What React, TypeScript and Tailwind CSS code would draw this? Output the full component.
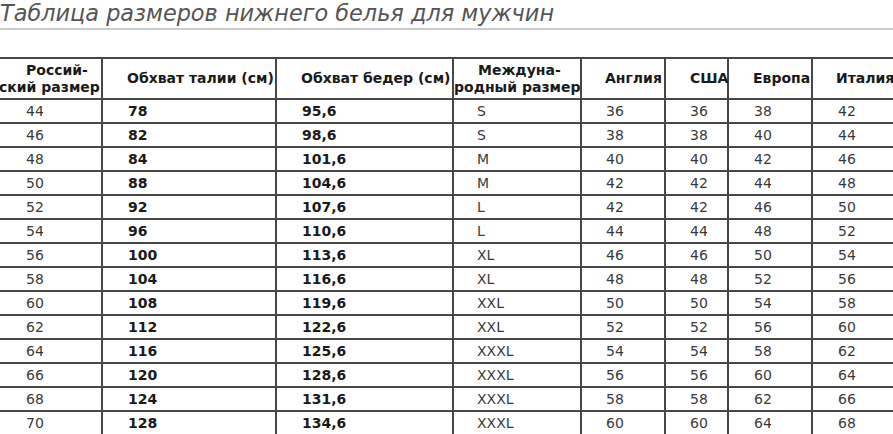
const rows: [string, string, string, string, string, string, string, string][] = [
  ['44', '78', '95,6', 'S', '36', '36', '38', '42'],
  ['46', '82', '98,6', 'S', '38', '38', '40', '44'],
  ['48', '84', '101,6', 'M', '40', '40', '42', '46'],
  ['50', '88', '104,6', 'M', '42', '42', '44', '48'],
  ['52', '92', '107,6', 'L', '42', '42', '46', '50'],
  ['54', '96', '110,6', 'L', '44', '44', '48', '52'],
  ['56', '100', '113,6', 'XL', '46', '46', '50', '54'],
  ['58', '104', '116,6', 'XL', '48', '48', '52', '56'],
  ['60', '108', '119,6', 'XXL', '50', '50', '54', '58'],
  ['62', '112', '122,6', 'XXL', '52', '52', '56', '60'],
  ['64', '116', '125,6', 'XXXL', '54', '54', '58', '62'],
  ['66', '120', '128,6', 'XXXL', '56', '56', '60', '64'],
  ['68', '124', '131,6', 'XXXL', '58', '58', '62', '66'],
  ['70', '128', '134,6', 'XXXL', '60', '60', '64', '68'],
];

const cell = 'border-2 border-[#474747] h-[24px] p-0 align-middle whitespace-nowrap';
const head = 'border-2 border-[#474747] p-0 align-middle whitespace-nowrap text-left font-bold text-[#1a1a1a]';

export default function App() {
  return (
    <div
      className="w-[893px] h-[434px] overflow-hidden bg-white"
      style={{ fontFamily: '"DejaVu Sans", Verdana, sans-serif' }}
    >
      <h1 className="text-[22.4px] leading-[27px] italic font-normal text-[#555555] whitespace-nowrap">
        Таблица размеров нижнего белья для мужчин
      </h1>
      <div className="mt-[1px] h-[2px] bg-[#cccccc]" />

      <table className="mt-[27px] ml-[-3px] table-fixed border-collapse w-[902px] text-[14px] leading-[17px]">
        <colgroup>
          <col className="w-[104px]" />
          <col className="w-[174px]" />
          <col className="w-[177px]" />
          <col className="w-[128px]" />
          <col className="w-[84px]" />
          <col className="w-[63px]" />
          <col className="w-[84px]" />
          <col className="w-[88px]" />
        </colgroup>
        <thead>
          <tr className="h-[41px]">
            <th className={head}>
              <div className="pl-[27px]">Россий-</div>
              <div className="pl-[0px]">ский размер</div>
            </th>
            <th className={head + ' pl-[24px]'}>Обхват талии (см)</th>
            <th className={head + ' pl-[24px]'}>Обхват бедер (см)</th>
            <th className={head}>
              <div className="pl-[24px]">Междуна-</div>
              <div className="pl-[0px]">родный размер</div>
            </th>
            <th className={head + ' pl-[23px]'}>Англия</th>
            <th className={head + ' pl-[24px]'}>США</th>
            <th className={head + ' pl-[24px]'}>Европа</th>
            <th className={head + ' pl-[23px]'}>Италия</th>
          </tr>
        </thead>
        <tbody>
          {rows.map((r) => (
            <tr key={r[0]}>
              <td className={cell + ' pl-[27px] text-[#3a3a3a]'}>{r[0]}</td>
              <td className={cell + ' pl-[25px] font-bold text-[#1a1a1a]'}>{r[1]}</td>
              <td className={cell + ' pl-[25px] font-bold text-[#1a1a1a]'}>{r[2]}</td>
              <td className={cell + ' pl-[23px] text-[#3a3a3a]'}>{r[3]}</td>
              <td className={cell + ' pl-[24px] text-[#3a3a3a]'}>{r[4]}</td>
              <td className={cell + ' pl-[24px] text-[#3a3a3a]'}>{r[5]}</td>
              <td className={cell + ' pl-[25px] text-[#3a3a3a]'}>{r[6]}</td>
              <td className={cell + ' pl-[25px] text-[#3a3a3a]'}>{r[7]}</td>
            </tr>
          ))}
        </tbody>
      </table>
    </div>
  );
}
